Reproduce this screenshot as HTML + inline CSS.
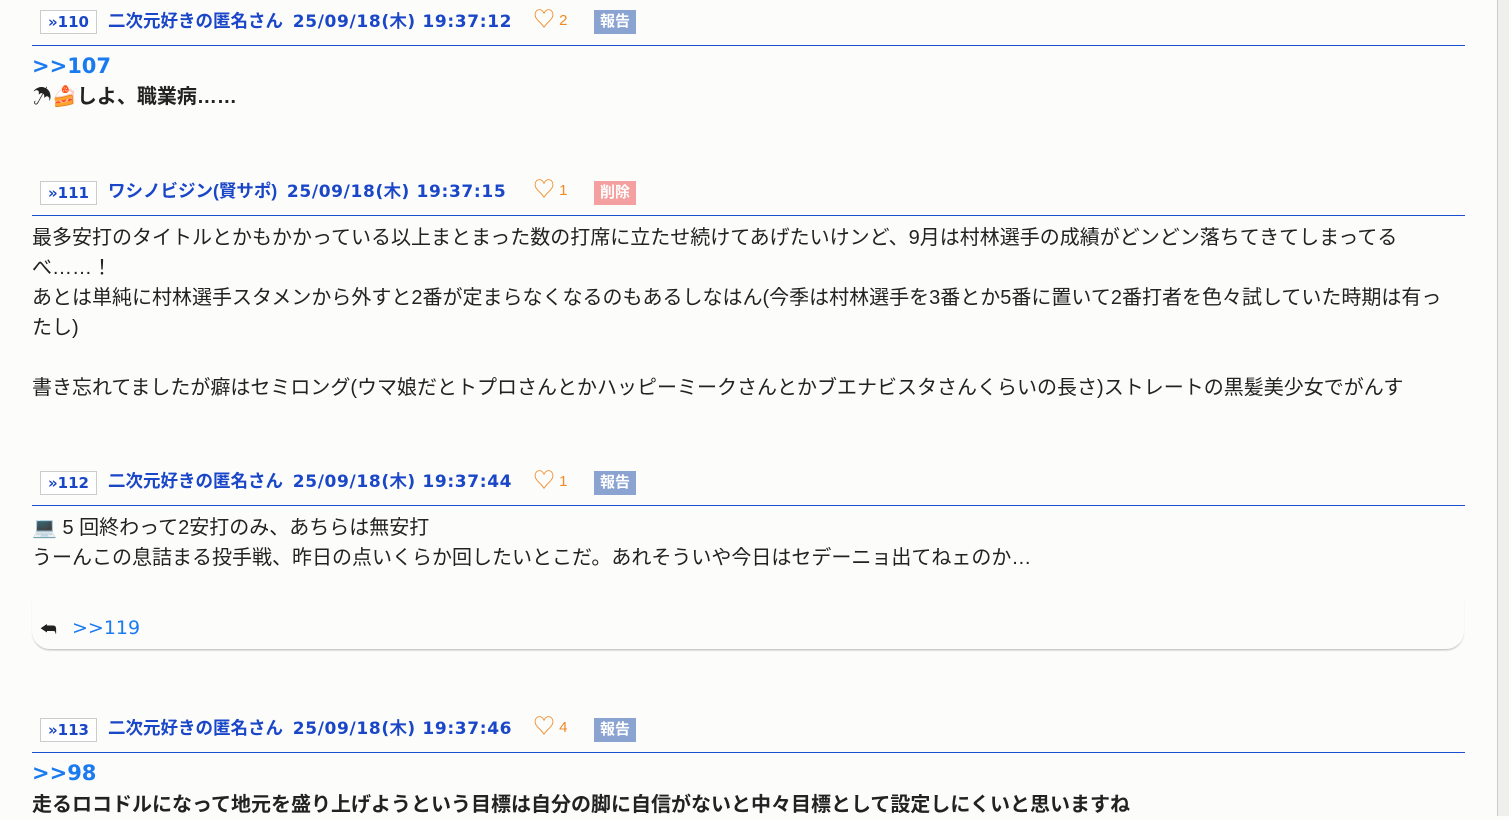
<!DOCTYPE html>
<html><head><meta charset="utf-8"><style>
body{margin:0;width:1509px;height:816px;background:#fcfcfb;overflow:hidden;position:relative;font-family:"Liberation Sans","Noto Sans CJK JP",sans-serif;color:#222}
.a{position:absolute;white-space:nowrap}
.num{border:1px solid #ccc;background:#fff;color:#1a46c8;font-weight:bold;font-size:15px;width:57px;height:24px;line-height:23px;text-align:center;box-sizing:border-box;font-family:"DejaVu Sans","Noto Sans CJK JP",sans-serif}
.hd{color:#1a46c8;font-weight:bold;font-size:17.5px;line-height:22px}
.dt{font-family:"DejaVu Sans",sans-serif;font-size:17px;letter-spacing:0.65px}
.hrt{color:#f08a24;font-size:15px;line-height:22px}
.hrt span{font-size:22px;vertical-align:-2px}
.rep{background:#8aa3d0;color:#fff;font-weight:bold;font-size:15px;width:42px;height:24px;line-height:24px;text-align:center}
.del{background:#f4a0a0}
.ln{left:32px;width:1433px;height:1px;background:#1a4fcf}
.t{font-size:20px;line-height:30px;left:32px}
.b{font-weight:bold}
.ref{color:#1a7af0;font-weight:bold;font-size:21px;left:32px;font-family:"DejaVu Sans",sans-serif}
</style></head><body>
<!-- 110 -->
<div class="a num" style="left:40px;top:10px">»110</div>
<div class="a hd" style="left:108px;top:10px">二次元好きの匿名さん&nbsp; <span class="dt">25/09/18(木) 19:37:12</span></div>
<div class="a hrt" style="left:533px;top:9px"><span>♡</span> 2</div>
<div class="a rep" style="left:594px;top:10px">報告</div>
<div class="a ln" style="top:45px"></div>
<div class="a ref" style="top:54px">&gt;&gt;107</div>
<div class="a t b" style="top:82px">☂🍰しよ、職業病……</div>
<!-- 111 -->
<div class="a num" style="left:40px;top:181px">»111</div>
<div class="a hd" style="left:108px;top:180px">ワシノビジン(賢サポ)&nbsp; <span class="dt">25/09/18(木) 19:37:15</span></div>
<div class="a hrt" style="left:533px;top:179px"><span>♡</span> 1</div>
<div class="a rep del" style="left:594px;top:181px">削除</div>
<div class="a ln" style="top:215px"></div>
<div class="a t" style="top:223px">最多安打のタイトルとかもかかっている以上まとまった数の打席に立たせ続けてあげたいけンど、9月は村林選手の成績がどンどン落ちてきてしまってる<br>べ……！<br>あとは単純に村林選手スタメンから外すと2番が定まらなくなるのもあるしなはん(今季は村林選手を3番とか5番に置いて2番打者を色々試していた時期は有っ<br>たし)<br><br>書き忘れてましたが癖はセミロング(ウマ娘だとトプロさんとかハッピーミークさんとかブエナビスタさんくらいの長さ)ストレートの黒髪美少女でがんす</div>
<!-- 112 -->
<div class="a num" style="left:40px;top:471px">»112</div>
<div class="a hd" style="left:108px;top:470px">二次元好きの匿名さん&nbsp; <span class="dt">25/09/18(木) 19:37:44</span></div>
<div class="a hrt" style="left:533px;top:470px"><span>♡</span> 1</div>
<div class="a rep" style="left:594px;top:471px">報告</div>
<div class="a ln" style="top:505px"></div>
<div class="a t" style="top:513px">💻 5 回終わって2安打のみ、あちらは無安打<br>うーんこの息詰まる投手戦、昨日の点いくらか回したいとこだ。あれそういや今日はセデーニョ出てねェのか…</div>
<div class="a" style="left:32px;top:600px;width:1432px;height:49px;border-bottom:1px solid #ccc;border-radius:0 0 18px 18px;box-shadow:0 1px 1px #ddd"></div>
<div class="a" style="left:40px;top:619px;font-size:18px;color:#222">⮪</div>
<div class="a" style="left:72px;top:617px;font-size:19px;color:#1a7af0;font-family:'DejaVu Sans',sans-serif">&gt;&gt;119</div>
<!-- 113 -->
<div class="a num" style="left:40px;top:718px">»113</div>
<div class="a hd" style="left:108px;top:717px">二次元好きの匿名さん&nbsp; <span class="dt">25/09/18(木) 19:37:46</span></div>
<div class="a hrt" style="left:533px;top:716px"><span>♡</span> 4</div>
<div class="a rep" style="left:594px;top:718px">報告</div>
<div class="a ln" style="top:752px"></div>
<div class="a ref" style="top:761px">&gt;&gt;98</div>
<div class="a t b" style="top:790px">走るロコドルになって地元を盛り上げようという目標は自分の脚に自信がないと中々目標として設定しにくいと思いますね</div>
<!-- scrollbar -->
<div class="a" style="left:1497px;top:0;width:12px;height:816px;background:#efefed;border-left:1px solid #ccc"></div>
</body></html>
